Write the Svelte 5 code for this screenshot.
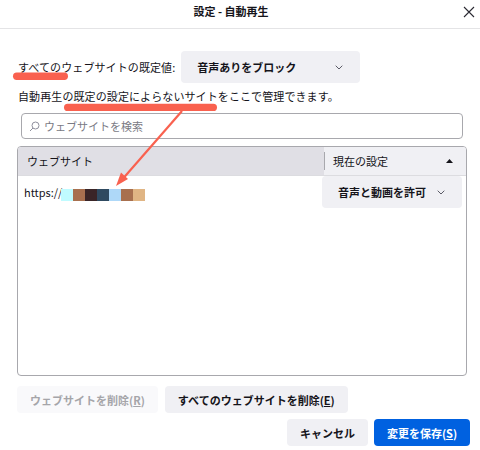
<script>
  const blocks = ['#c0fbff', '#a8704f', '#3a2527', '#2f4a60', '#aed8f8', '#a8704f', '#e0b584'];
</script>

<div class="dialog">
  <header class="titlebar">
    <span class="title">設定 - 自動再生</span>
    <button class="close" aria-label="閉じる">
      <svg width="12" height="12" viewBox="0 0 12 12"><path d="M1 1l10 10M11 1L1 11" stroke="#2b2a33" stroke-width="1.1" fill="none"/></svg>
    </button>
  </header>

  <div class="content">
    <div class="default-row">
      <span class="spaced">すべてのウェブサイトの既定値:</span>
      <button class="select top-select">
        <span>音声ありをブロック</span>
        <svg class="chev" width="8" height="5" viewBox="0 0 8 5"><path d="M.7.7L4 4l3.3-3.3" stroke="#5b5b66" stroke-width="1" fill="none"/></svg>
      </button>
    </div>

    <p class="desc spaced">自動再生の既定の設定によらないサイトをここで管理できます。</p>

    <div class="search">
      <svg width="11" height="11" viewBox="0 0 11 11"><circle cx="6.5" cy="4.5" r="3.5" stroke="#8f8f9d" fill="none"/><path d="M4 7L1 10" stroke="#8f8f9d" fill="none"/></svg>
      <span>ウェブサイトを検索</span>
    </div>

    <div class="table">
      <div class="thead">
        <div class="th site-col">ウェブサイト</div>
        <div class="th status-col">
          <span>現在の設定</span>
          <svg width="7" height="4" viewBox="0 0 7 4"><path d="M3.5 0L7 4H0z" fill="#15141a"/></svg>
        </div>
      </div>
      <div class="row">
        <div class="url">
          <span>https://</span>
          <span class="blur">
            {#each blocks as c}
              <i style="background: {c}"></i>
            {/each}
          </span>
        </div>
        <button class="select row-select">
          <span>音声と動画を許可</span>
          <svg class="chev" width="8" height="5" viewBox="0 0 8 5"><path d="M.7.7L4 4l3.3-3.3" stroke="#5b5b66" stroke-width="1" fill="none"/></svg>
        </button>
      </div>
    </div>

    <div class="remove-row">
      <button class="btn disabled">ウェブサイトを削除(<u>R</u>)</button>
      <button class="btn">すべてのウェブサイトを削除(<u>E</u>)</button>
    </div>

    <div class="footer">
      <button class="btn cancel">キャンセル</button>
      <button class="btn primary">変更を保存(<u>S</u>)</button>
    </div>
  </div>

  <!-- hand-drawn annotations on top of the screenshot -->
  <svg class="marks" width="480" height="450" viewBox="0 0 480 450">
    <path d="M16.7 76.3H64.3" stroke="#f9614f" stroke-width="7.4" stroke-linecap="round" fill="none"/>
    <path d="M67.7 107.4H213.3" stroke="#f9614f" stroke-width="7.4" stroke-linecap="round" fill="none"/>
    <path d="M182 111L120 182" stroke="#f9614f" stroke-width="2.2" fill="none"/>
    <path d="M116 186L121 172.5L128 179z" fill="#f9614f"/>
  </svg>
</div>

<style>
  :global(body) {
    margin: 0;
    background: #fff;
  }

  .dialog {
    position: relative;
    width: 480px;
    height: 450px;
    overflow: hidden;
    font-family: "Noto Sans CJK JP", "Noto Sans", sans-serif;
    font-size: 11px;
    color: #15141a;
    background: #fff;
  }

  button {
    font: inherit;
    color: inherit;
    border: none;
    padding: 0;
    background: none;
  }

  .titlebar {
    position: relative;
    display: flex;
    align-items: center;
    justify-content: center;
    height: 28px;
    border-bottom: 1px solid #e4e4e6;
  }

  .title {
    font-weight: 700;
    font-size: 11px;
    padding: 0 18px 6px 0;
  }

  .close {
    position: absolute;
    right: 5px;
    top: 6px;
    display: flex;
  }

  .content {
    display: flex;
    flex-direction: column;
    padding: 22px 10px 0 17px;
  }

  .spaced {
    letter-spacing: 0.1px;
  }

  .default-row {
    display: flex;
    align-items: center;
    gap: 6px;
    padding-left: 1px;
    height: 32px;
  }

  .select {
    display: flex;
    align-items: center;
    justify-content: space-between;
    background: #f0f0f4;
    border-radius: 4px;
    font-weight: 700;
  }

  .top-select {
    width: 179px;
    height: 32px;
    padding: 0 17px 0 16px;
  }

  .desc {
    margin: 5px 0 0 1px;
    height: 17px;
    line-height: 17px;
  }

  .search {
    display: flex;
    align-items: center;
    gap: 4px;
    margin: 8px 0 0 4px;
    width: 442px;
    height: 26px;
    box-sizing: border-box;
    padding-left: 7px;
    border: 1px solid #a8a8ad;
    border-radius: 4px;
    color: #7a7a84;
  }

  .table {
    margin-top: 7px;
    width: 450px;
    height: 230px;
    box-sizing: border-box;
    border: 1px solid #a8a8ad;
    border-radius: 4px;
    overflow: hidden;
  }

  .thead {
    display: flex;
    height: 28px;
    border-bottom: 1px solid #dcdce0;
  }

  .th {
    display: flex;
    align-items: center;
  }

  .site-col {
    width: 306px;
    padding-left: 9px;
    box-sizing: border-box;
    background: #e0dfe5;
  }

  .status-col {
    flex: 1;
    justify-content: space-between;
    padding: 0 13px 0 9px;
    background: #f0f0f4;
    position: relative;
  }

  .status-col::before {
    content: "";
    position: absolute;
    left: 0;
    top: 5px;
    bottom: 5px;
    width: 1px;
    background: #a8a8ad;
  }

  .row {
    display: flex;
    justify-content: space-between;
    padding-right: 4px;
  }

  .url {
    display: flex;
    align-items: center;
    padding-left: 6px;
    height: 32px;
  }

  .blur {
    display: flex;
    margin: 6px 0 0 -1px;
  }

  .blur i {
    display: block;
    width: 12px;
    height: 12px;
  }

  .row-select {
    width: 140px;
    height: 32px;
    padding: 0 17px 0 16px;
  }

  .remove-row {
    display: flex;
    gap: 7px;
    margin-top: 10px;
  }

  .btn {
    height: 27px;
    padding: 0 13px;
    background: #f0f0f4;
    border-radius: 4px;
    font-weight: 700;
  }

  .disabled {
    background: #f9f9fb;
    color: #a5a5a9;
  }

  .footer {
    display: flex;
    justify-content: flex-end;
    gap: 6px;
    margin-top: 6px;
  }

  .cancel {
    width: 81px;
    padding: 0;
  }

  .primary {
    width: 96px;
    padding: 0;
    background: #0061e0;
    color: #fff;
  }

  .marks {
    position: absolute;
    left: 0;
    top: 0;
    pointer-events: none;
  }
</style>
